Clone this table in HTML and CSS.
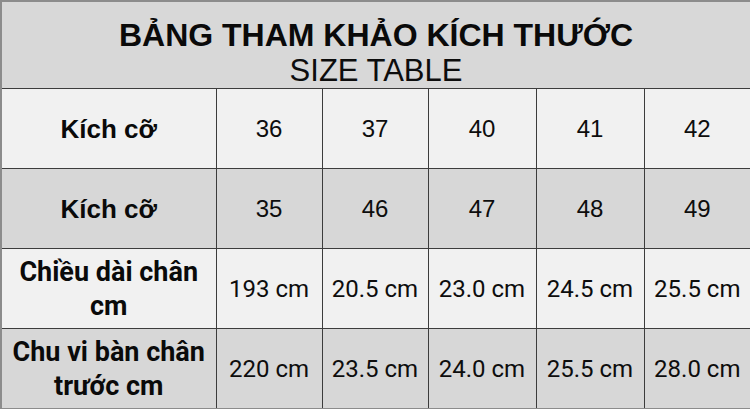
FILE: index.html
```html
<!DOCTYPE html>
<html lang="vi">
<head>
<meta charset="utf-8">
<title>Bảng tham khảo kích thước</title>
<link rel="stylesheet" href="styles.css">
</head>
<body>
<table class="size-table">
  <colgroup>
    <col class="c-label">
    <col class="c-a">
    <col class="c-a">
    <col class="c-b">
    <col class="c-b">
    <col class="c-c">
  </colgroup>
  <thead>
    <tr>
      <th class="head" colspan="6">
        <div class="title">BẢNG THAM KHẢO KÍCH THƯỚC</div>
        <div class="subtitle">SIZE TABLE</div>
      </th>
    </tr>
  </thead>
  <tbody>
    <tr class="row light arial">
      <th class="label">Kích cỡ</th>
      <td>36</td><td>37</td><td>40</td><td>41</td><td>42</td>
    </tr>
    <tr class="row dark arial">
      <th class="label">Kích cỡ</th>
      <td>35</td><td>46</td><td>47</td><td>48</td><td>49</td>
    </tr>
    <tr class="row light roboto">
      <th class="label">Chiều dài chân<br>cm</th>
      <td>193 cm</td><td>20.5 cm</td><td>23.0 cm</td><td>24.5 cm</td><td>25.5 cm</td>
    </tr>
    <tr class="row dark roboto">
      <th class="label">Chu vi bàn chân<br>trước cm</th>
      <td>220 cm</td><td>23.5 cm</td><td>24.0 cm</td><td>25.5 cm</td><td>28.0 cm</td>
    </tr>
  </tbody>
</table>
</body>
</html>
```

FILE: styles.css
```css
html, body {
  margin: 0;
  padding: 0;
  background: #ffffff;
}

.size-table {
  width: 750px;
  height: 408px;
  table-layout: fixed;
  border-collapse: collapse;
  border: 2px solid #8c8c8c;
  color: #111111;
  font-family: "Liberation Sans", Arial, sans-serif;
}

.c-label { width: 215px; }
.c-a { width: 106px; }
.c-b { width: 108px; }
.c-c { width: 107px; }

.size-table th,
.size-table td {
  border: 1px solid #3c3c3c;
  padding: 0;
  text-align: center;
}

.size-table .head {
  height: 70px;
  background: #d8d8d8;
  vertical-align: top;
  padding: 16px 0 0 0;
  font-weight: normal;
}

.title {
  font-size: 32px;
  line-height: 35px;
  font-weight: bold;
  color: #0a0a0a;
}

.subtitle {
  font-size: 31px;
  line-height: 35px;
  font-weight: normal;
  color: #0d0d0d;
}

.row th,
.row td {
  height: 79px;
  vertical-align: middle;
}

.row.light { background: #f1f1f1; }
.row.dark { background: #d7d7d7; }

.row td {
  font-size: 24px;
  font-weight: normal;
  color: #0d0d0d;
}

.label {
  font-weight: bold;
  font-size: 26px;
  line-height: 34px;
  color: #0a0a0a;
}

.arial .label,
.arial td {
  font-family: "Liberation Sans", Arial, sans-serif;
}

.roboto .label,
.roboto td {
  font-family: Roboto, "Liberation Sans", sans-serif;
}

.roboto .label {
  font-size: 27px;
}
```
